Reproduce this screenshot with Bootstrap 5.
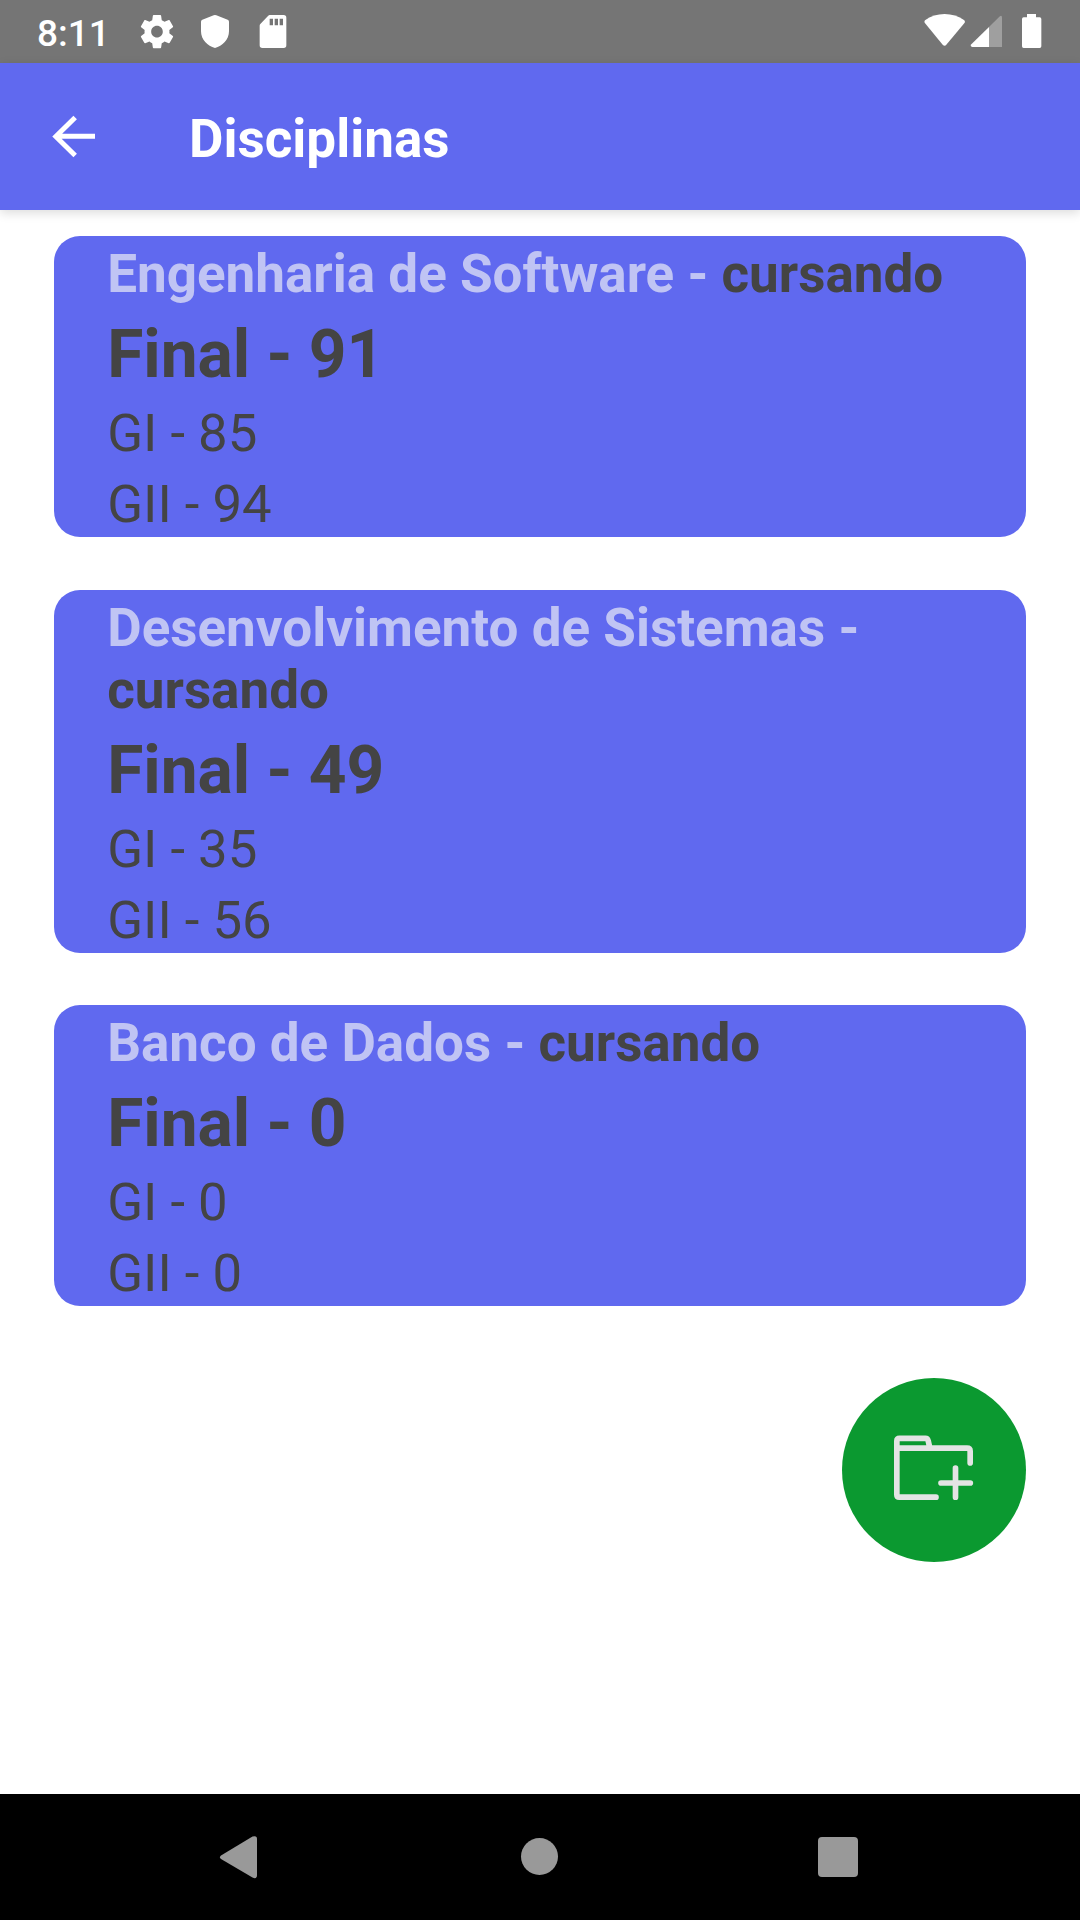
<!DOCTYPE html>
<html lang="pt-BR">
<head>
<meta charset="utf-8">
<meta name="viewport" content="width=device-width, initial-scale=1">
<title>Disciplinas</title>
<link href="https://cdn.jsdelivr.net/npm/bootstrap@5.3.0/dist/css/bootstrap.min.css" rel="stylesheet">
<style>
  body { font-family: Roboto, "Noto Sans", sans-serif; background: #fff; }
  .status-bar { height: 63px; background: #757575; padding: 0 38px 0 37px; }
  .clock { font-size: 37px; font-weight: 500; line-height: 63px; padding-top: 2px; width: 102px; }
  .app-bar { height: 147px; background: #6069ef; padding: 0; box-shadow: 0 3px 10px rgba(0,0,0,.14); z-index: 1; }
  .back-btn { width: 189px; height: 147px; }
  .app-title { font-size: 53px; font-weight: 700; line-height: 62px; padding-top: 5px; }
  .subjects { padding: 26px 54px 0; gap: 53px; }
  .subject { background: #6069ef; border: 0; border-radius: 26px; color: #444; padding: 0 53.2px; }
  .subject:last-child { margin-top: -1px; }
  .subject-name { font-size: 53px; line-height: 62px; padding: 7px 0 2px; margin: 0; }
  .subject-name span { color: #c0c4f4; }
  .final-grade { font-size: 65.8px; line-height: 77px; padding: 9px 0 2px; margin: 0; }
  .grade { font-size: 52.7px; line-height: 62px; padding: 7px 0 2px; margin: 0; }
  .fab { width: 184px; height: 184px; background: #0b9930; margin: 72px 54px 0 0; }
  .nav-keys { height: 126px; background: #000; }
  svg { display: block; flex: none; }
</style>
<script src="https://cdn.jsdelivr.net/npm/bootstrap@5.3.0/dist/js/bootstrap.bundle.min.js"></script>
</head>
<body>
<div class="d-flex flex-column vh-100 overflow-hidden">
  <div class="status-bar d-flex justify-content-between text-white">
    <div class="d-flex">
      <div class="clock">8:11</div>
      <svg width="153" height="63" viewBox="417 0 459 189" fill="#fff">
        <g transform="translate(411.2 35.2) scale(4.98)"><path d="M19.43 12.98c.04-.32.07-.64.07-.98s-.03-.66-.07-.98l2.11-1.65c.19-.15.24-.42.12-.64l-2-3.46c-.12-.22-.39-.3-.61-.22l-2.49 1c-.52-.4-1.08-.73-1.69-.98l-.38-2.65C14.46 2.18 14.25 2 14 2h-4c-.25 0-.46.18-.49.42l-.38 2.65c-.61.25-1.17.59-1.69.98l-2.49-1c-.23-.09-.49 0-.61.22l-2 3.46c-.13.22-.07.49.12.64l2.11 1.65c-.04.32-.07.65-.07.98s.03.66.07.98l-2.11 1.65c-.19.15-.24.42-.12.64l2 3.46c.12.22.39.3.61.22l2.49-1c.52.4 1.08.73 1.69.98l.38 2.65c.03.24.24.42.49.42h4c.25 0 .46-.18.49-.42l.38-2.65c.61-.25 1.17-.59 1.69-.98l2.49 1c.23.09.49 0 .61-.22l2-3.46c.12-.22.07-.49-.12-.64l-2.11-1.65zM12 15.5c-1.93 0-3.5-1.57-3.5-3.5s1.57-3.500 3.500-3.500 3.500 1.570 3.500 3.500-1.570 3.500-3.500 3.500z"/></g>
        <path d="M641 46q4-2 8 0l34 13q4 2 4 6v29c0 25-20 45-42 50-22-5-42-25-42-50V65q0-4 4-6z"/>
        <path fill-rule="evenodd" d="M809 45h42q8 0 8 8v83q0 8-8 8h-64q-8 0-8-8V77q0-3 2-5l23-24q3-3 5-3zM809 56v20h10V56zM824 56v20h10V56zM839 56v20h10V56z"/>
      </svg>
    </div>
    <svg width="118" height="63" viewBox="132 0 354 189" fill="#fff">
      <path d="M135 61c33-25 84-25 118 0q3 4 1 7l-55 66q-5 6-11 0l-54-66q-2-4 1-7z"/>
      <path fill="#9f9f9f" d="M327 81l31-31q8-6 8 3v88h-39z"/>
      <path d="M327 81v60h-50q-8-2-3-8z"/>
      <path d="M441 42h27v10h11q5 0 5 5v82q0 5-5 5h-48q-5 0-5-5V57q0-5 5-5h10z"/>
    </svg>
  </div>

  <nav class="app-bar navbar flex-nowrap justify-content-start text-white">
    <svg class="back-btn" viewBox="0 189 567 441" role="img" aria-label="Voltar">
      <path d="M285 409H172M225.500 352.500L167.500 409.500L225.500 466.500" fill="none" stroke="#fff" stroke-width="15"/>
    </svg>
    <h1 class="app-title m-0">Disciplinas</h1>
  </nav>

  <main class="flex-grow-1 d-flex flex-column">
    <div class="subjects d-flex flex-column">
      <section class="subject card">
        <h2 class="subject-name fw-bold"><span>Engenharia de Software - </span>cursando</h2>
        <p class="final-grade fw-bold">Final - 91</p>
        <p class="grade">GI - 85</p>
        <p class="grade">GII - 94</p>
      </section>
      <section class="subject card">
        <h2 class="subject-name fw-bold"><span>Desenvolvimento de Sistemas - </span>cursando</h2>
        <p class="final-grade fw-bold">Final - 49</p>
        <p class="grade">GI - 35</p>
        <p class="grade">GII - 56</p>
      </section>
      <section class="subject card">
        <h2 class="subject-name fw-bold"><span>Banco de Dados - </span>cursando</h2>
        <p class="final-grade fw-bold">Final - 0</p>
        <p class="grade">GI - 0</p>
        <p class="grade">GII - 0</p>
      </section>
    </div>
    <button class="fab btn rounded-circle border-0 p-0 align-self-end" aria-label="Adicionar disciplina">
      <svg width="184" height="184" viewBox="36 54 552 552" fill="none" stroke="#e4e4e4" stroke-width="17" stroke-linecap="round" stroke-linejoin="round">
        <path d="M318 411.500H208q-7.500 0-7.500-7.500V243q0-8 8-8h78q6 0 8 7l4 18M201 264.500h210q9.500 0 9.500 9V309M376.500 324v87.500M333 369h88"/>
      </svg>
    </button>
  </main>

  <div class="nav-keys">
    <svg width="1080" height="126" viewBox="0 0 1080 126" fill="#999">
      <path d="M221 61.500L252.500 42.600Q257 41 257 45V81Q257 85.500 252.500 83.600L221 65Q219 63 221 61.500z"/>
      <circle cx="539.500" cy="62.500" r="18.500"/>
      <rect x="818" y="43" width="40" height="40" rx="4"/>
    </svg>
  </div>
</div>
</body>
</html>
